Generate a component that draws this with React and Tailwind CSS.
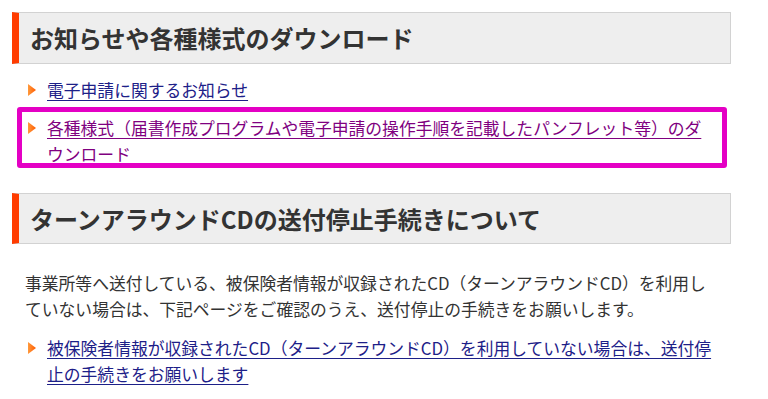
import React from "react";

const font = { fontFamily: '"Noto Sans CJK JP", "Noto Sans", sans-serif' };

function Arrow() {
  return (
    <span className="flex h-[26px] w-[19px] shrink-0 items-center">
      <svg width="8" height="12" viewBox="0 0 8 12">
        <defs>
          <linearGradient id="ag" x1="0" y1="0" x2="1" y2="0">
            <stop offset="0" stopColor="#ff9a3c" />
            <stop offset="1" stopColor="#ff5a00" />
          </linearGradient>
        </defs>
        <polygon points="0,0 8,6 0,12" fill="url(#ag)" />
      </svg>
    </span>
  );
}

function Heading({ children, className = "" }) {
  return (
    <h2
      className={
        "flex items-center border border-[#d2d2d2] border-l-[7px] border-l-[#ff3c00] bg-[#eeeeee] pl-[11px] text-[24px] font-bold text-[#333333] " +
        className
      }
    >
      {children}
    </h2>
  );
}

export default function App() {
  return (
    <div className="min-h-[399px] w-[768px] bg-white" style={font}>
      <div className="w-[731px] pl-3 pt-3">
        <Heading className="h-[52px]">お知らせや各種様式のダウンロード</Heading>
        <ul className="mt-[13px] flex flex-col gap-3 pl-4 text-[16.8px] leading-[26px]">
          <li className="flex">
            <Arrow />
            <a href="#" className="text-[#1d2088] underline underline-offset-[3px]">
              電子申請に関するお知らせ
            </a>
          </li>
          <li className="relative flex">
            <div className="pointer-events-none absolute left-[-11px] top-[-8px] h-[61px] w-[710px] rounded-[3px] border-[5px] border-[#e400c4]" />
            <Arrow />
            <a href="#" className="text-[#800080] underline underline-offset-[3px]">
              各種様式（届書作成プログラムや電子申請の操作手順を記載したパンフレット等）のダ
              <br />
              ウンロード
            </a>
          </li>
        </ul>
        <Heading className="mt-[26px] h-[51px]">ターンアラウンドCDの送付停止手続きについて</Heading>
        <p className="ml-[13px] mt-[26px] text-[16.8px] leading-[26px] text-[#333333]">
          事業所等へ送付している、被保険者情報が収録されたCD（ターンアラウンドCD）を利用し
          <br />
          ていない場合は、下記ページをご確認のうえ、送付停止の手続きをお願いします。
        </p>
        <div className="mt-[13px] flex pl-4 text-[16.8px] leading-[26px]">
          <Arrow />
          <a href="#" className="text-[#1d2088] underline underline-offset-[3px]">
            被保険者情報が収録されたCD（ターンアラウンドCD）を利用していない場合は、送付停
            <br />
            止の手続きをお願いします
          </a>
        </div>
      </div>
    </div>
  );
}
